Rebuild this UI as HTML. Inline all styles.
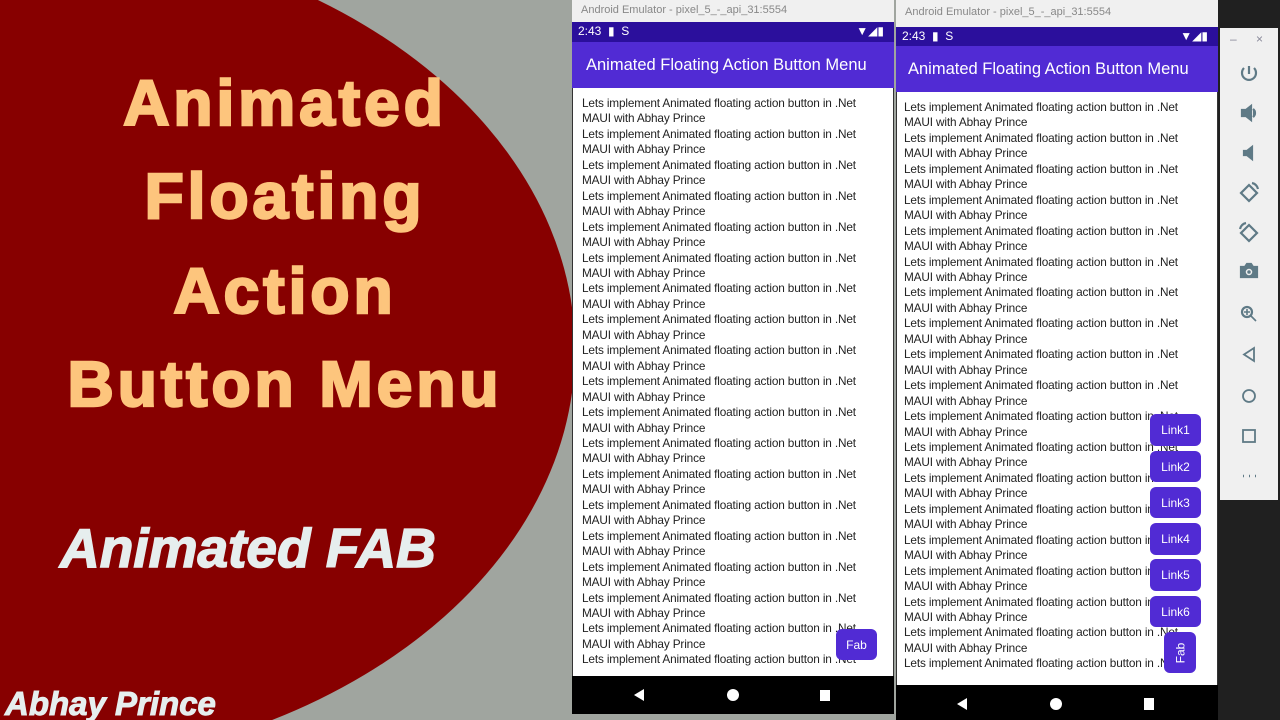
<!DOCTYPE html>
<html><head><meta charset="utf-8"><style>
*{margin:0;padding:0;box-sizing:border-box}
html,body{width:1280px;height:720px;overflow:hidden}
#wrap{width:1280px;height:720px;overflow:hidden;background:#a0a59f;position:relative;font-family:"Liberation Sans",sans-serif}
.ell{position:absolute;left:-575px;top:-70px;width:1150px;height:840px;border-radius:50%;background:#870000}
.title{position:absolute;left:0;width:570px;text-align:center;color:#fdc57d;font-weight:bold;font-size:64px;letter-spacing:4px;-webkit-text-stroke:2.5px #fdc57d}
.fab{position:absolute;color:#e6eeee;font-weight:bold;font-style:italic}
.win{position:absolute;background:#fff;overflow:hidden}
.tb{position:absolute;left:0;right:0;top:0;height:22px;background:#f0f0f0;color:#888;font-size:11px;padding:4px 9px}
.sb{position:absolute;left:0;right:0;background:#2b0f9c;color:#fff;font-size:12px;padding:2px 6px}
.ab{position:absolute;left:0;right:0;background:#512bd4;color:#fff;font-size:16.5px;padding-left:14px}
.ct{position:absolute;left:10px;font-size:11.8px;line-height:15.45px;color:#222;letter-spacing:-0.15px;white-space:pre}
.nav{position:absolute;left:0;right:0;background:#000}
.btn{position:absolute;background:#512bd4;color:#fff;font-size:12px;border-radius:6px;display:flex;align-items:center;justify-content:center}
.side{position:absolute;left:1220px;top:28px;width:58px;height:472px;background:#f0f0f0}
.side svg{position:absolute;left:17px}
</style></head><body><div id="wrap">
<div class="ell"></div>
<div class="title" style="top:66px">Animated</div>
<div class="title" style="top:159px">Floating</div>
<div class="title" style="top:254px">Action</div>
<div class="title" style="top:347px">Button Menu</div>
<div class="fab" style="left:60px;top:516px;font-size:55px;-webkit-text-stroke:1.5px #e6eeee">Animated FAB</div>
<div class="fab" style="left:5px;top:685px;font-size:33px;-webkit-text-stroke:1px #e6eeee">Abhay Prince</div>

<div class="win" style="left:572px;top:0;width:322px;height:714px;background:#333">
<div class="tb">Android Emulator - pixel_5_-_api_31:5554</div>
<div class="sb" style="top:22px;height:20px">2:43 &nbsp;▮ &nbsp;S<span style="position:absolute;right:10px">▼◢▮</span></div>
<div class="ab" style="top:42px;height:46px;line-height:46px">Animated Floating Action Button Menu</div>
<div style="position:absolute;left:1px;right:1px;top:88px;height:588px;background:#fff">
<div class="ct" id="c1" style="top:8px;left:9px"></div>
</div>
<div class="nav" style="top:676px;height:38px">
<svg width="322" height="38"><polygon points="62,19 72,13 72,25" fill="#fff"/><circle cx="161" cy="19" r="6" fill="#fff"/><rect x="248" y="14" width="10" height="11" fill="#fff"/></svg>
</div>
<div class="btn" style="left:264px;top:629px;width:41px;height:31px">Fab</div>
</div>

<div style="position:absolute;left:1218px;top:0;width:62px;height:720px;background:#202020"></div>
<div class="win" style="left:896px;top:0;width:322px;height:720px;background:#333">
<div class="tb" style="height:27px;padding-top:6px">Android Emulator - pixel_5_-_api_31:5554</div>
<div class="sb" style="top:27px;height:19px">2:43 &nbsp;▮ &nbsp;S<span style="position:absolute;right:10px">▼◢▮</span></div>
<div class="ab" style="top:46px;height:46px;line-height:46px;padding-left:12px">Animated Floating Action Button Menu</div>
<div style="position:absolute;left:1px;right:1px;top:92px;height:593px;background:#fff">
<div class="ct" id="c2" style="top:8px;left:7px"></div>
</div>
<div class="nav" style="top:685px;height:35px">
<svg width="322" height="35"><polygon points="61,19 71,13 71,25" fill="#fff"/><circle cx="160" cy="19" r="6" fill="#fff"/><rect x="248" y="13" width="10" height="12" fill="#fff"/></svg>
</div>
<div class="btn" style="left:254px;top:414px;width:51px;height:32px">Link1</div>
<div class="btn" style="left:254px;top:451px;width:51px;height:31px">Link2</div>
<div class="btn" style="left:254px;top:487px;width:51px;height:31px">Link3</div>
<div class="btn" style="left:254px;top:523px;width:51px;height:32px">Link4</div>
<div class="btn" style="left:254px;top:559px;width:51px;height:32px">Link5</div>
<div class="btn" style="left:254px;top:596px;width:51px;height:31px">Link6</div>
<div class="btn" style="left:268px;top:632px;width:32px;height:41px"><span style="transform:rotate(-90deg)">Fab</span></div>
</div>

<div class="side">
<div style="position:absolute;left:10px;top:4px;color:#889;font-size:12px">–</div>
<div style="position:absolute;left:36px;top:4px;color:#889;font-size:12px">×</div>
<svg width="24" height="460" viewBox="0 0 24 460" fill="none" stroke="#5f7a86" stroke-width="2.2">
<path d="M12 38v8M7 40a7 7 0 1 0 10 0"/>
<path d="M5 82h4l5-4v14l-5-4H5z M16 81a5 5 0 0 1 0 8" fill="#5f7a86"/>
<path d="M7 123h3l5-4v12l-5-4H7z" fill="#5f7a86"/>
<path d="M12 157l8 8-8 8-8-8z M15 155a8 8 0 0 1 6 6"/>
<path d="M12 197l8 8-8 8-8-8z M9 195a8 8 0 0 0 -6 6"/>
<path d="M4 239h4l2-3h4l2 3h4v10H4z" fill="#5f7a86"/><circle cx="12" cy="244" r="2.5" stroke="#f0f0f0" stroke-width="1.5"/>
<circle cx="10" cy="284" r="5"/><path d="M14 288l5 5M10 281v6M7 284h6" stroke-width="1.6"/>
<path d="M17 320v13l-10-6.5z" stroke-width="1.8"/>
<circle cx="12" cy="368" r="6" stroke-width="1.8"/>
<rect x="6" y="402" width="12" height="12" stroke-width="1.8"/>
<path d="M6 448h1M12 448h1M18 448h1" stroke-width="2.5"/>
</svg>
</div>
</div>
<script>
var s="";for(var i=0;i<19;i++){s+="Lets implement Animated floating action button in .Net\n"+(i<18?"MAUI with Abhay Prince\n":"")}
document.getElementById("c1").textContent=s;
document.getElementById("c2").textContent=s;
</script>
</body></html>
